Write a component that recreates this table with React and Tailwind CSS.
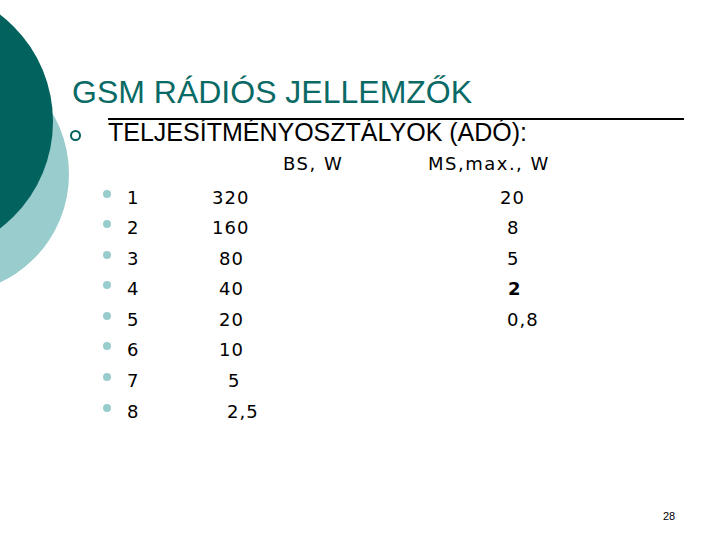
export default function App() {
  const rows = [
    { n: "1", bs: "320", bsPad: "pl-0", ms: "20", msPad: "pl-0" },
    { n: "2", bs: "160", bsPad: "pl-0", ms: "8", msPad: "pl-[7px]" },
    { n: "3", bs: "80", bsPad: "pl-[7px]", ms: "5", msPad: "pl-[7px]" },
    { n: "4", bs: "40", bsPad: "pl-[7px]", ms: "2", msPad: "pl-[8px] font-bold" },
    { n: "5", bs: "20", bsPad: "pl-[7px]", ms: "0,8", msPad: "pl-[7px]" },
    { n: "6", bs: "10", bsPad: "pl-[7px]" },
    { n: "7", bs: "5", bsPad: "pl-[16px]" },
    { n: "8", bs: "2,5", bsPad: "pl-[15px]" },
  ];
  return (
    <div className="relative w-[720px] h-[540px] bg-white overflow-hidden">
      <div className="absolute rounded-full bg-[#99cccc] w-[240px] h-[240px] left-[-171px] top-[54px]" />
      <div className="absolute rounded-full bg-[#02625e] w-[269px] h-[269px] left-[-216px] top-[-13px]" />
      <div className="relative">
        <div
          className="pt-[76px] pl-[72px] text-[32px] leading-[32px] text-[#0a6a65] whitespace-nowrap"
          style={{ fontFamily: '"Liberation Sans", Arial, sans-serif' }}
        >
          GSM RÁDIÓS JELLEMZŐK
        </div>
        <div className="mt-[10px] ml-[108px] w-[576px] h-[2px] bg-black" />
        <div
          className="flex items-start pl-[70px] text-[25px] leading-[25px] text-black whitespace-nowrap"
          style={{ fontFamily: '"Liberation Sans", Arial, sans-serif' }}
        >
          <div className="mt-[10px] w-[11px] h-[11px] rounded-full border-2 border-[#02625e]" />
          <div className="ml-[27px]">TELJESÍTMÉNYOSZTÁLYOK (ADÓ):</div>
        </div>
        <div
          className="text-black"
          style={{ fontFamily: '"DejaVu Sans", Verdana, sans-serif' }}
        >
          <div className="mt-[4px] mb-[3px] flex pl-[283px] text-[18px] leading-[30.57px] tracking-[1.5px] whitespace-pre">
            <span className="w-[145px]">BS, W</span>
            <span>MS,max., W</span>
          </div>
          <div className="flex flex-col">
            {rows.map((r) => (
              <div
                key={r.n}
                className="flex items-start pl-[103px] h-[30.57px] text-[18px] leading-[30.57px] tracking-[1px] whitespace-pre"
              >
                <div className="mt-[7px] w-[8px] h-[8px] rounded-full bg-[#99cccc]" />
                <span className="ml-[16px] w-[85px]">{r.n}</span>
                <span className={"w-[288px] " + r.bsPad}>{r.bs}</span>
                {r.ms && <span className={r.msPad}>{r.ms}</span>}
              </div>
            ))}
          </div>
        </div>
      </div>
      <div
        className="absolute left-[663px] top-[509px] text-[11px] leading-[14px] text-black"
        style={{ fontFamily: '"Liberation Sans", Arial, sans-serif' }}
      >
        28
      </div>
    </div>
  );
}
